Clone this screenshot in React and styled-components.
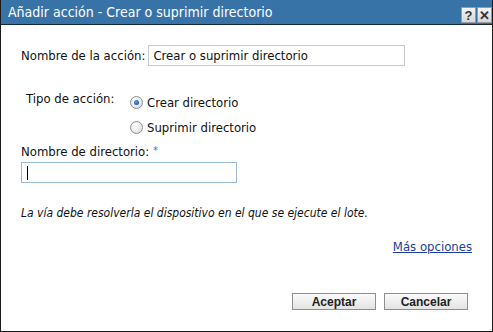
import styled, { createGlobalStyle } from 'styled-components'

const Global = createGlobalStyle`
  html, body { margin: 0; padding: 0; background: #fff; }
  body { font-family: "DejaVu Sans Condensed", "DejaVu Sans", sans-serif; font-size: 13px; color: #111; }
`

const Dialog = styled.div`
  width: 493px;
  height: 332px;
  box-sizing: border-box;
  border: 1px solid #1b1b1b;
  border-top: none;
  display: flex;
  flex-direction: column;
  background: #fff;
`

const TitleBar = styled.div`
  height: 24px;
  background: #3873a8;
  border-bottom: 1px solid #15293d;
  display: flex;
  align-items: center;
  padding-left: 7px;
  color: #fff;
  font-size: 14px;
`

const TitleText = styled.span`
  flex: 1;
`

const TitleButtons = styled.div`
  display: flex;
  gap: 1px;
  align-self: flex-end;
  margin-bottom: 1px;
`

const TitleButton = styled.span`
  width: 15px;
  height: 16px;
  background: linear-gradient(#f4f4f4, #d8d8d8);
  border: 1px solid #9a9a9a;
  box-sizing: border-box;
  display: flex;
  align-items: center;
  justify-content: center;
  color: #333;
  font-family: "Liberation Sans", sans-serif;
  font-weight: bold;
  font-size: 13px;
`

const Body = styled.div`
  flex: 1;
  padding: 20px 20px 0 20px;
  display: flex;
  flex-direction: column;
`

const Row = styled.div`
  display: flex;
  align-items: center;
  gap: 3px;
`

const Label = styled.label`
  white-space: nowrap;
`

const TextBox = styled.div`
  width: ${p => p.$w}px;
  height: 21px;
  box-sizing: border-box;
  border: 1px solid ${p => (p.$focus ? '#9bbad6' : '#c9c9c9')};
  display: flex;
  align-items: center;
  padding-left: 4px;
  margin-top: ${p => p.$top || 0}px;
  background: #fff;
`

const Caret = styled.span`
  width: 1px;
  height: 14px;
  background: #000;
  margin-left: 1px;
`

const TypeRow = styled.div`
  display: flex;
  margin-top: 25px;
  padding-left: 5px;
`

const TypeLabel = styled.div`
  width: 104px;
  padding-top: 0px;
`

const RadioList = styled.div`
  display: flex;
  flex-direction: column;
  gap: 9px;
  padding-top: 3px;
`

const RadioItem = styled.div`
  display: flex;
  align-items: center;
  gap: 4px;
  height: 16px;
`

const RadioDot = styled.span`
  width: 11px;
  height: 11px;
  border-radius: 50%;
  border: 1px solid #8e8e8e;
  background: radial-gradient(circle at 40% 35%, #ffffff, #d9d9d9);
  display: flex;
  align-items: center;
  justify-content: center;
  &::after {
    content: '';
    width: 5px;
    height: 5px;
    border-radius: 50%;
    background: radial-gradient(circle at 40% 35%, #5aa0e8, #0b3f8a);
    display: ${p => (p.$on ? 'block' : 'none')};
  }
`

const FieldLabel = styled.div`
  margin-top: 9px;
`

const Required = styled.span`
  color: #3c78c8;
  font-size: 11px;
  vertical-align: top;
`

const Note = styled.div`
  margin-top: 23px;
  font-style: italic;
  font-size: 12px;
`

const LinkRow = styled.div`
  margin-top: 19px;
  display: flex;
  justify-content: flex-end;
`

const MoreLink = styled.a`
  color: #1b3f9a;
  text-decoration: underline;
  font-size: 13px;
`

const Footer = styled.div`
  margin-top: 39px;
  display: flex;
  justify-content: flex-end;
  gap: 8px;
  padding-right: 4px;
`

const Button = styled.button`
  width: 84px;
  height: 17px;
  box-sizing: border-box;
  border: 1px solid #8f8f8f;
  background: linear-gradient(#fafafa, #e4e4e4);
  font-family: "Liberation Sans", Arial, sans-serif;
  font-weight: bold;
  font-size: 12px;
  color: #222;
  padding: 0;
  line-height: 14px;
`

export default function App() {
  return (
    <>
      <Global />
      <Dialog>
        <TitleBar>
          <TitleText>Añadir acción - Crear o suprimir directorio</TitleText>
          <TitleButtons>
            <TitleButton>?</TitleButton>
            <TitleButton>✕</TitleButton>
          </TitleButtons>
        </TitleBar>
        <Body>
          <Row>
            <Label>Nombre de la acción:</Label>
            <TextBox $w={257}>Crear o suprimir directorio</TextBox>
          </Row>
          <TypeRow>
            <TypeLabel>Tipo de acción:</TypeLabel>
            <RadioList>
              <RadioItem><RadioDot $on />Crear directorio</RadioItem>
              <RadioItem><RadioDot />Suprimir directorio</RadioItem>
            </RadioList>
          </TypeRow>
          <FieldLabel>Nombre de directorio: <Required>*</Required></FieldLabel>
          <TextBox $w={216} $top={3} $focus><Caret /></TextBox>
          <Note>La vía debe resolverla el dispositivo en el que se ejecute el lote.</Note>
          <LinkRow><MoreLink href="#">Más opciones</MoreLink></LinkRow>
          <Footer>
            <Button>Aceptar</Button>
            <Button>Cancelar</Button>
          </Footer>
        </Body>
      </Dialog>
    </>
  )
}
